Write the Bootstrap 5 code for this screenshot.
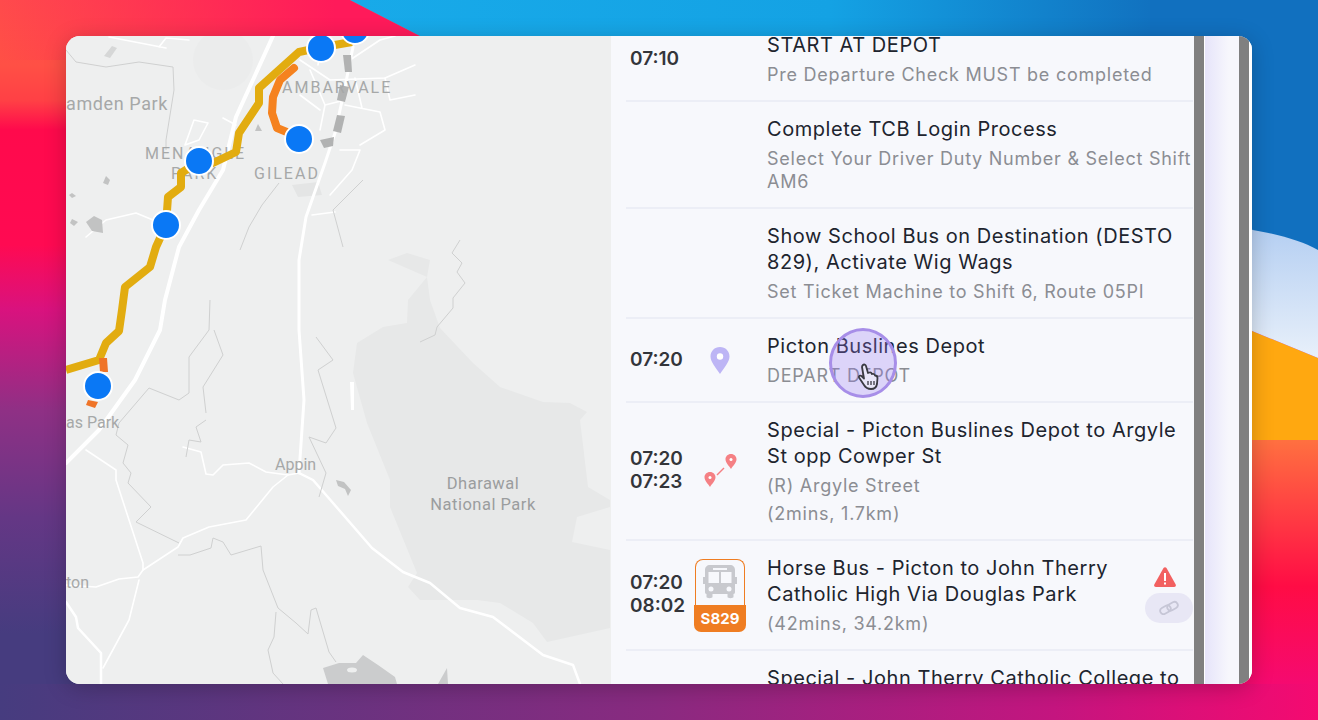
<!DOCTYPE html>
<html lang="en">
<head>
    <meta charset="UTF-8">
    <meta name="viewport" content="width=device-width, initial-scale=1.0">
    <title>Run Sheet</title>
    <link href="https://cdn.jsdelivr.net/npm/bootstrap@5.3.3/dist/css/bootstrap.min.css" rel="stylesheet">
    <style>
        html, body { height: 720px; overflow: hidden; }
        body { position: relative; background: #7a2f80; font-family: "Inter", "Liberation Sans", sans-serif; padding: 36px 66px; }
        .wallpaper { position: absolute; left: 0; top: 0; width: 1318px; height: 720px; }
        .app-window { position: relative; width: 1186px; height: 648px; border-radius: 14px; overflow: hidden; background: #f7f8fc; box-shadow: 0 4px 22px rgba(0, 0, 0, .22); }
        .map-pane { width: 545px; flex: none; background: #eeefef; }
        .map-pane svg { display: block; width: 545px; height: 648px; }
        .map-label { font-family: "Roboto", "Liberation Sans", sans-serif; fill: #a6a8a8; font-size: 16px; }
        .map-big { font-size: 18px; letter-spacing: .6px; }
        .map-caps { letter-spacing: 2px; font-size: 16px; }
        .map-park { font-size: 16.500px; letter-spacing: .5px; fill: #9b9d9e; text-anchor: middle; }
        .trip-pane { position: relative; width: 583px; flex: none; background: #f7f8fc; overflow: hidden; }
        .trip-list { margin-top: -18px; }
        .trip-row { margin-left: 15px; margin-right: 1px; border-bottom: 2px solid #eceef6; padding: 14px 0 14px 4px; }
        .trip-time { width: 64px; flex: none; font-size: 19px; line-height: 23px; font-weight: 600; color: #33353a; margin-top: -2px; }
        .trip-icon { width: 52px; flex: none; margin-right: 21px; }
        .trip-title { font-size: 20px; line-height: 26px; color: #20242e; letter-spacing: .55px; white-space: nowrap; }
        .trip-sub { font-size: 18px; line-height: 23px; color: #8b8d93; margin-top: 5px; letter-spacing: .75px; white-space: nowrap; }
        .bus-badge { width: 52px; }
        .bus-top { height: 46px; margin: 0 1px; border: 1px solid #ef7d22; border-bottom: 0; border-radius: 8px 8px 0 0; }
        .bus-code { height: 27px; background: #ef7d22; color: #fff; font-size: 15px; font-weight: 700; line-height: 27px; border-radius: 0 0 7px 7px; text-align: center; }
        .trip-actions { width: 48px; flex: none; }
        .warn-mark { display: block; margin: 0 auto; position: relative; left: -4px; }
        .link-pill { width: 48px; height: 30px; border-radius: 15px; background: #e8e7f5; margin-top: 6px; }
        .side-bar { width: 10px; flex: none; background: #808080; }
        .side-strip { width: 35px; flex: none; background: linear-gradient(90deg, #e6e4fa, #f7f7fc 70%); border-left: 1px solid #fff; }
        .side-edge { width: 3px; flex: none; background: #fff; }
        .tap-ring { position: absolute; left: 218px; top: 292px; width: 68px; height: 70px; border-radius: 50%; background: rgba(150, 120, 240, .28); border: 3px solid #a78ee8; }
        .tap-hand { position: absolute; left: 245px; top: 327px; }
    </style>
</head>
<body>
    <svg class="wallpaper" viewBox="0 0 1318 720" aria-hidden="true">
        <defs>
            <linearGradient id="wallLeft" x1="0" y1="0" x2="0" y2="1">
                <stop offset="0" stop-color="#ff4a4c"/>
                <stop offset=".09" stop-color="#ff5045"/>
                <stop offset=".14" stop-color="#ff4045"/>
                <stop offset=".18" stop-color="#ff0a4c"/>
                <stop offset=".34" stop-color="#ff0a52"/>
                <stop offset=".43" stop-color="#d9127e"/>
                <stop offset=".57" stop-color="#8f3085"/>
                <stop offset=".72" stop-color="#643785"/>
                <stop offset=".88" stop-color="#463c7f"/>
                <stop offset="1" stop-color="#463c7f"/>
            </linearGradient>
            <linearGradient id="wallTop" x1="0" y1="0" x2="1" y2="0">
                <stop offset="0" stop-color="#ff1a5a" stop-opacity="0"/>
                <stop offset=".8" stop-color="#ff1a5a"/>
            </linearGradient>
            <linearGradient id="wallBottom" x1="0" y1="0" x2="1" y2="0">
                <stop offset="0" stop-color="#463c7f"/>
                <stop offset=".5" stop-color="#8a2a80"/>
                <stop offset=".8" stop-color="#c4157f"/>
                <stop offset="1" stop-color="#f50a70"/>
            </linearGradient>
            <linearGradient id="wallSky" x1="0" y1="0" x2="1" y2="0">
                <stop offset="0" stop-color="#18aae9"/>
                <stop offset=".6" stop-color="#14a2e4"/>
                <stop offset="1" stop-color="#1172c0"/>
            </linearGradient>
            <linearGradient id="wallPale" x1="0" y1="0" x2="0" y2="1">
                <stop offset="0" stop-color="#b5cff2"/>
                <stop offset="1" stop-color="#e8f0fa"/>
            </linearGradient>
            <linearGradient id="wallRed" x1="0" y1="0" x2="0" y2="1">
                <stop offset="0" stop-color="#ff7040"/>
                <stop offset=".6" stop-color="#ff0c45"/>
                <stop offset="1" stop-color="#f50a70"/>
            </linearGradient>
        </defs>
        <rect width="1318" height="720" fill="url(#wallLeft)"/>
        <path d="M0 0H350L420 36V60H0Z" fill="url(#wallTop)"/>
        <path d="M350 0H1150V60H420V36Z" fill="url(#wallSky)"/>
        <rect x="1150" width="168" height="260" fill="#1170bf"/>
        <path d="M1240 440H1318V684H1240Z" fill="url(#wallRed)"/>
        <path d="M1240 326L1318 358V440H1240Z" fill="#ffa810"/>
        <path d="M1240 228C1275 233 1300 240 1318 250V358L1240 326Z" fill="url(#wallPale)"/>
        <rect y="684" width="1318" height="36" fill="url(#wallBottom)"/>
    </svg>

    <div class="app-window d-flex">
        <div class="map-pane">
            <svg viewBox="66 36 545 648" aria-hidden="true">
                <!-- park and land shapes -->
                <path d="M388 260L407 253L430 260L427 277L408 300L407 323L383 327L357 343L353 373L367 423L390 480L390 507L417 573L408 587L420 600L477 600L500 603L533 623L547 642L610 628V550L572 542L577 517L610 507V500L588 487L580 420L587 412L570 403L543 402L500 387L473 363L440 328L430 300L427 277Z" fill="#e7e8e8"/>
                <circle cx="223" cy="60" r="30" fill="#ebecec"/>
                <path d="M292 185L318 182L322 195L298 197Z" fill="#e4e5e5"/>
                <path d="M323 668L339 663L356 663L363 655L378 665L395 677L397 684H328Z" fill="#cbcccd"/>
                <path d="M438 684L447 668L448 684Z" fill="#cbcccd"/>
                <ellipse cx="352" cy="670" rx="5" ry="2.500" fill="#eeefef"/>
                <!-- minor roads -->
                <g fill="none" stroke="#fff" stroke-width="1.600" stroke-linecap="round" stroke-linejoin="round">
                    <path d="M109 37L166 48M159 47L166 38L189 40"/>
                    <path d="M194 120L208 123L199 140L185 145L194 120"/>
                    <path d="M86 237L106 220L136 213L153 220"/>
                    <path d="M223 118L236 125"/>
                    <path d="M86 450L116 470L116 480L143 563L143 570"/>
                    <path d="M183 447L201 452L206 474L213 475L223 465L249 463L266 472L288 475L299 473"/>
                    <path d="M288 475L273 487L246 520L209 527L183 538L178 547L143 570L138 577L119 579L96 587L66 585"/>
                    <path d="M139 580L129 620L103 668"/>
                    <path d="M300 60L330 80L385 78L415 65M310 70L325 105L345 100M325 105L320 130M350 60L380 40L395 36"/>
                    <path d="M345 105L380 112L385 130L360 145M300 95L320 110M355 78L362 108M385 78L390 100L415 95"/>
                    <path d="M321 40L318 65M340 150L360 150L352 170L330 195M312 215L335 212"/>
                </g>
                <!-- main roads -->
                <g fill="none" stroke="#fff" stroke-linecap="round" stroke-linejoin="round">
                    <path d="M273 36L236 117L223 170L199 210L179 247L165 300L160 330L135 380L99 430L66 463" stroke-width="4"/>
                    <path d="M353 47L345 87L335 133L325 163L313 197L306 217L299 260L299 330L304 400L299 473" stroke-width="3"/>
                    <path d="M299 473L313 480L333 503L372 548L403 572L430 583L460 608L493 617L543 655L573 665L580 684" stroke-width="2.500"/>
                    <path d="M66 602L76 617L78 628L101 653L101 684" stroke-width="2.500"/>
                </g>
                <!-- contour lines -->
                <g fill="none" stroke="#cfd0d0" stroke-width="1" stroke-linejoin="round">
                    <path d="M66 50L76 62L106 67L139 62L173 67L174 90L166 140L166 150"/>
                    <path d="M149 388L179 400L189 393L189 357L209 330L210 300"/>
                    <path d="M203 387L223 355L214 330M203 387L206 413"/>
                    <path d="M186 457L189 440L201 442L196 427L206 420"/>
                    <path d="M149 388L119 423L116 435L128 445L123 463L131 473L128 483L151 507L136 522L179 543"/>
                    <path d="M178 555L190 555L211 548L213 538L223 542L231 555L261 546L263 570L278 608L296 623L308 634L311 610L316 608L329 652L336 662"/>
                    <path d="M276 612L274 637L268 650L273 673L283 684"/>
                    <path d="M309 437L326 443L336 428L318 370L333 360L316 337M309 437L326 473L319 497"/>
                    <path d="M460 240L452 253L462 263L457 272L465 283L453 298L453 308L437 327L435 335L420 342"/>
                    <path d="M279 183L262 205L249 227L240 250M363 180L333 210L343 247"/>
                </g>
                <g fill="#c2c3c3">
                    <path d="M94 216L102 220L103 233L92 231L86 222Z"/>
                    <path d="M72 219L78 222L74 226L70 223Z"/>
                    <path d="M106 176L110 180L108 185L103 183Z"/>
                    <path d="M72 193L76 196L72 198L69 195Z"/>
                    <path d="M258 124L262 131L255 131Z"/>
                    <path d="M112 46L117 48L110 58L104 56Z" fill="#d6d7d7"/>
                    <path d="M336 480L344 482L351 490L348 496L345 489L338 486Z"/>
                </g>
                <g fill="#b1b2b2">
                    <path d="M343 55L351 55L352 72L345 72Z"/>
                    <path d="M340 85L349 87L345 102L337 100Z"/>
                    <path d="M337 115L345 116L341 133L333 131Z"/>
                    <path d="M320 140L334 137L333 146L324 148Z"/>
                </g>
                <path d="M350 382H354V410H351Z" fill="#fff"/>
                <!-- labels -->
                <text class="map-label map-big" x="66" y="110">amden Park</text>
                <text class="map-label map-caps" x="145" y="159">MENANGLE</text>
                <text class="map-label map-caps" x="171" y="179">PARK</text>
                <text class="map-label map-caps" x="254" y="179">GILEAD</text>
                <text class="map-label map-caps" x="282" y="93">AMBARVALE</text>
                <text class="map-label" x="66" y="428">as Park</text>
                <text class="map-label" x="275" y="470">Appin</text>
                <text class="map-label map-park" x="483" y="489">Dharawal</text>
                <text class="map-label map-park" x="483" y="510">National Park</text>
                <text class="map-label" x="66" y="588">ton</text>
                <!-- route -->
                <path d="M66 370L99 360L106 343L119 331L122 310L125 287L150 267L156 247L166 225L168 197L181 187L181 173L199 162L213 163L236 152L239 133L259 103L259 88L299 52L323 47L352 42" fill="none" stroke="#e2ac10" stroke-width="8" stroke-linejoin="round"/>
                <path d="M294 68L280 80L273 97L272 113L277 128L299 137" fill="none" stroke="#f5821f" stroke-width="8" stroke-linejoin="round" stroke-linecap="round"/>
                <path d="M99 358L107 358L108 372L100 372ZM88 400L98 402L95 408L86 405Z" fill="#ef7428"/>
                <g fill="#0a78f5" stroke="#fff" stroke-width="2">
                    <circle cx="321" cy="48" r="14"/>
                    <circle cx="355" cy="30" r="14"/>
                    <circle cx="199" cy="161" r="14"/>
                    <circle cx="166" cy="225" r="14"/>
                    <circle cx="98" cy="386" r="14"/>
                    <circle cx="299" cy="139" r="14"/>
                </g>
            </svg>
        </div>

        <div class="trip-pane">
            <div class="trip-list">
                <div class="trip-row d-flex align-items-center">
                    <div class="trip-time">07:10</div>
                    <div class="trip-icon"></div>
                    <div>
                        <div class="trip-title">START AT DEPOT</div>
                        <div class="trip-sub">Pre Departure Check MUST be completed</div>
                    </div>
                </div>
                <div class="trip-row d-flex align-items-center">
                    <div class="trip-time"></div>
                    <div class="trip-icon"></div>
                    <div>
                        <div class="trip-title">Complete TCB Login Process</div>
                        <div class="trip-sub">Select Your Driver Duty Number &amp; Select Shift<br>AM6</div>
                    </div>
                </div>
                <div class="trip-row d-flex align-items-center">
                    <div class="trip-time"></div>
                    <div class="trip-icon"></div>
                    <div>
                        <div class="trip-title">Show School Bus on Destination (DESTO<br>829), Activate Wig Wags</div>
                        <div class="trip-sub">Set Ticket Machine to Shift 6, Route 05PI</div>
                    </div>
                </div>
                <div class="trip-row d-flex align-items-center">
                    <div class="trip-time">07:20</div>
                    <div class="trip-icon text-center">
                        <svg width="20" height="27" viewBox="0 0 20 27" aria-hidden="true"><path d="M10 0C4.500 0 .5 4.200 .5 9.500C.5 15 6 21 10 27C14 21 19.500 15 19.500 9.500C19.500 4.200 15.500 0 10 0Z" fill="#bdb5f5"/><circle cx="10" cy="9.500" r="3.200" fill="#fff"/></svg>
                    </div>
                    <div>
                        <div class="trip-title">Picton Buslines Depot</div>
                        <div class="trip-sub">DEPART DEPOT</div>
                    </div>
                </div>
                <div class="trip-row d-flex align-items-center">
                    <div class="trip-time">07:20<br>07:23</div>
                    <div class="trip-icon text-center">
                        <svg width="40" height="40" viewBox="0 0 40 40" aria-hidden="true">
                            <path d="M17 24L24 17" stroke="#f58084" stroke-width="1.500"/>
                            <path d="M31 3C27.700 3 25.500 5.500 25.500 8.300C25.500 11.500 29 15 31 18C33 15 36.500 11.500 36.500 8.300C36.500 5.500 34.300 3 31 3Z" fill="#f58084"/><circle cx="31" cy="8.500" r="1.500" fill="#fff"/>
                            <path d="M10 21C6.700 21 4.500 23.500 4.500 26.300C4.500 29.500 8 33 10 36C12 33 15.500 29.500 15.500 26.300C15.500 23.500 13.300 21 10 21Z" fill="#f58084"/><circle cx="10" cy="26.500" r="1.500" fill="#fff"/>
                        </svg>
                    </div>
                    <div>
                        <div class="trip-title">Special - Picton Buslines Depot to Argyle<br>St opp Cowper St</div>
                        <div class="trip-sub">(R) Argyle Street</div>
                        <div class="trip-sub">(2mins, 1.7km)</div>
                    </div>
                </div>
                <div class="trip-row d-flex align-items-center">
                    <div class="trip-time">07:20<br>08:02</div>
                    <div class="trip-icon bus-badge">
                        <div class="bus-top d-flex justify-content-center align-items-center">
                            <svg width="36" height="34" viewBox="0 0 36 34" aria-hidden="true"><path d="M8 0H28C31 0 33 2 33 5V12H35V19H33V27C33 28 32.500 29 31.500 29V32C31.500 33.500 25.500 33.500 25.500 32V29H10.500V32C10.500 33.500 4.500 33.500 4.500 32V29C3.500 29 3 28 3 27V19H1V12H3V5C3 2 5 0 8 0Z" fill="#c8c9ce"/><path d="M11 3H25V5H11ZM6.500 7H17V18H6.500ZM19 7H29.500V18H19Z" fill="#f7f8fc"/><circle cx="9" cy="24" r="2.500" fill="#f7f8fc"/><circle cx="27" cy="24" r="2.500" fill="#f7f8fc"/></svg>
                        </div>
                        <div class="bus-code">S829</div>
                    </div>
                    <div class="flex-grow-1">
                        <div class="trip-title">Horse Bus - Picton to John Therry<br>Catholic High Via Douglas Park</div>
                        <div class="trip-sub">(42mins, 34.2km)</div>
                    </div>
                    <div class="trip-actions">
                        <svg class="warn-mark" width="22" height="20" viewBox="0 0 22 20" aria-hidden="true"><path d="M9.500 1C10.200 0 11.800 0 12.500 1L21.700 17.500C22.300 18.700 21.500 20 20.200 20H1.800C.5 20 -.3 18.700 .3 17.500Z" fill="#f26060"/><rect x="10" y="6" width="2" height="8" fill="#fff"/><rect x="10" y="15.500" width="2" height="2" fill="#fff"/></svg>
                        <div class="link-pill d-flex justify-content-center align-items-center">
                            <svg width="20" height="16" viewBox="0 0 20 16" aria-hidden="true"><g fill="none" stroke="#c6c6d6" stroke-width="1.800"><rect x="1" y="6.500" width="11" height="6.500" rx="3.200" transform="rotate(-30 6.500 9.800)"/><rect x="8" y="3" width="11" height="6.500" rx="3.200" transform="rotate(-30 13.500 6.200)"/></g></svg>
                        </div>
                    </div>
                </div>
                <div class="trip-row d-flex">
                    <div class="trip-time"></div>
                    <div class="trip-icon"></div>
                    <div>
                        <div class="trip-title">Special - John Therry Catholic College to</div>
                    </div>
                </div>
            </div>
            <div class="tap-ring"></div>
            <svg class="tap-hand" width="24" height="28" viewBox="0 0 24 28" aria-hidden="true"><path d="M7 2C8 1 9.500 1.500 10 3L12 10L13.500 9.500C15 9 15.500 10 16 11C17 10.500 18.500 11 19 12.500C20.500 12.500 21.500 13.500 21.500 15L21 21C20.500 24 18 26 15 26C11.500 26 9.500 24.500 8 22L3 14.500C2.500 13 4 12 5.500 13L8 15.500L6 4C6 3 6.500 2.500 7 2Z" fill="#e9e6f8" stroke="#3a3a42" stroke-width="1.800" stroke-linejoin="round"/><path d="M12 18V22M15 18V22M18 18V22" stroke="#3a3a42" stroke-width="1.300"/></svg>
        </div>

        <div class="side-bar"></div>
        <div class="side-strip"></div>
        <div class="side-bar"></div>
        <div class="side-edge"></div>
    </div>
</body>
</html>
